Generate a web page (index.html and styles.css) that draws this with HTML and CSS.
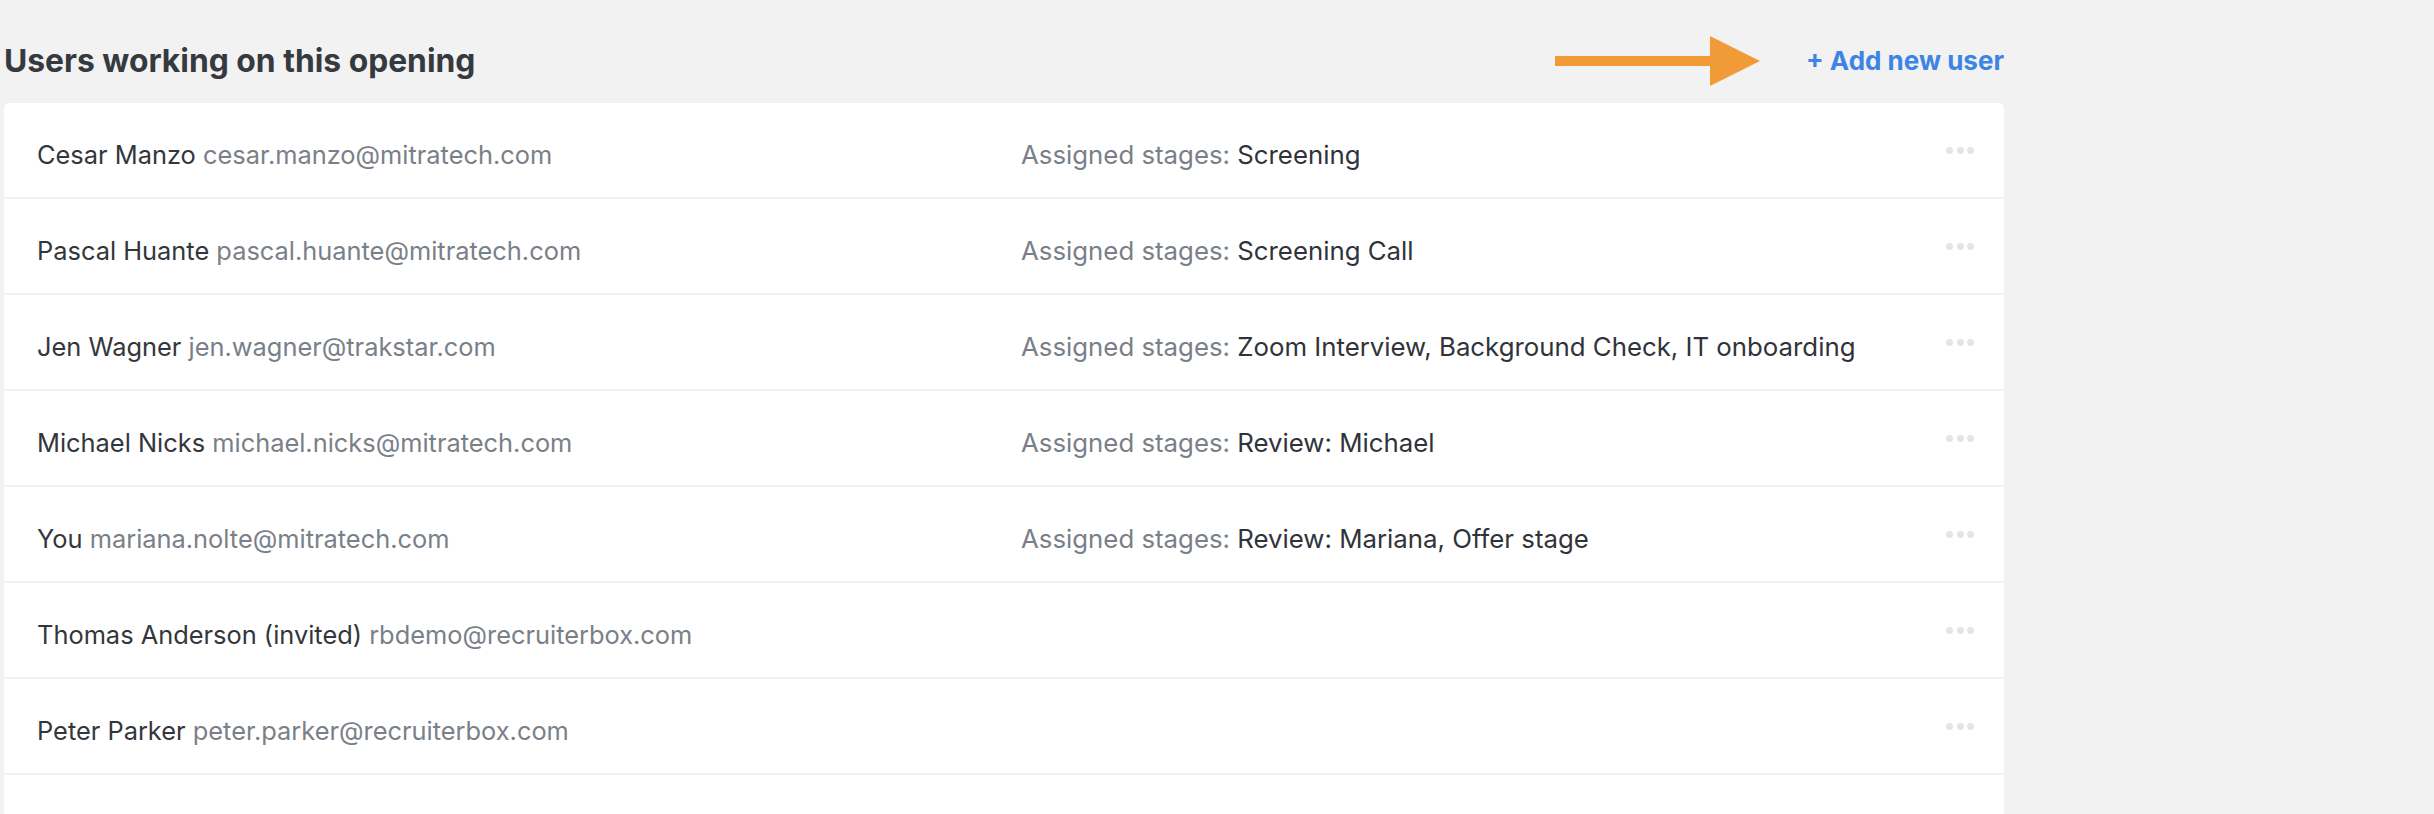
FILE: index.html
```html
<!DOCTYPE html>
<html lang="en">

<head>
	<meta charset="UTF-8">
	<title>Opening users</title>
	<link rel="stylesheet" href="styles.css">
</head>

<body>
	<div class="users">
		<div class="users-head">
			<h2 class="users-title">Users working on this opening</h2>
			<div class="users-add">
				<!-- pointer to the add link -->
				<svg class="hint-arrow" width="205" height="50" viewBox="0 0 205 50">
					<rect x="0" y="20" width="156" height="10" fill="#f19a38"/>
					<polygon points="155,0 205,25 155,50" fill="#f19a38"/>
				</svg>
				<a class="add-link" href="#">+ Add new user</a>
			</div>
		</div>

		<ul class="user-list">
			<li class="user-row">
				<div class="user"><span class="name">Cesar Manzo</span> <span class="email">cesar.manzo@mitratech.com</span></div>
				<div class="stages"><span class="label">Assigned stages:</span> Screening</div>
				<div class="more"><i></i><i></i><i></i></div>
			</li>
			<li class="user-row">
				<div class="user"><span class="name">Pascal Huante</span> <span class="email">pascal.huante@mitratech.com</span></div>
				<div class="stages"><span class="label">Assigned stages:</span> Screening Call</div>
				<div class="more"><i></i><i></i><i></i></div>
			</li>
			<li class="user-row">
				<div class="user"><span class="name">Jen Wagner</span> <span class="email">jen.wagner@trakstar.com</span></div>
				<div class="stages"><span class="label">Assigned stages:</span> Zoom Interview, Background Check, IT onboarding</div>
				<div class="more"><i></i><i></i><i></i></div>
			</li>
			<li class="user-row">
				<div class="user"><span class="name">Michael Nicks</span> <span class="email">michael.nicks@mitratech.com</span></div>
				<div class="stages"><span class="label">Assigned stages:</span> Review: Michael</div>
				<div class="more"><i></i><i></i><i></i></div>
			</li>
			<li class="user-row">
				<div class="user"><span class="name">You</span> <span class="email">mariana.nolte@mitratech.com</span></div>
				<div class="stages"><span class="label">Assigned stages:</span> Review: Mariana, Offer stage</div>
				<div class="more"><i></i><i></i><i></i></div>
			</li>
			<li class="user-row">
				<div class="user"><span class="name">Thomas Anderson (invited)</span> <span class="email">rbdemo@recruiterbox.com</span></div>
				<div class="stages"></div>
				<div class="more"><i></i><i></i><i></i></div>
			</li>
			<li class="user-row">
				<div class="user"><span class="name">Peter Parker</span> <span class="email">peter.parker@recruiterbox.com</span></div>
				<div class="stages"></div>
				<div class="more"><i></i><i></i><i></i></div>
			</li>
			<li class="user-row">
				<div class="user"></div>
				<div class="stages"></div>
				<div class="more"></div>
			</li>
		</ul>
	</div>
</body>

</html>
```
FILE: styles.css
```css
body,
h2,
ul,
li {
	margin: 0;
	padding: 0;
}

ul {
	list-style-type: none;
}

body {
	background: #f2f2f2;
	font-family: Inter, "Liberation Sans", sans-serif;
	color: #33373c;
}

.users {
	width: 2000px;
	margin-left: 4px;
}

/* title on the left, add link on the right */
.users-head {
	display: flex;
	justify-content: space-between;
	align-items: center;
	height: 50px;
	margin-top: 36px;
}

.users-title {
	font-size: 31.8px;
	font-weight: 700;
	line-height: 38px;
	color: #363a3f;
}

.users-add {
	display: flex;
	align-items: center;
	gap: 46px;
}

.hint-arrow {
	display: block;
}

.add-link {
	font-size: 26px;
	font-weight: 700;
	line-height: 32px;
	color: #3d84e6;
	text-decoration: none;
}

.user-list {
	margin-top: 17px;
	background: #fff;
	border-radius: 5px 5px 0 0;
}

.user-row {
	display: grid;
	grid-template-columns: 984px 1fr 28px;
	align-items: center;
	height: 94px;
	padding: 0 30px 0 33px;
	border-bottom: 2px solid #f2f2f2;
	font-size: 25.4px;
	line-height: 30px;
}

.user,
.stages {
	padding-top: 9px;
	white-space: nowrap;
}

.stages {
	font-size: 25.8px;
	color: #30343a;
}

.email,
.label {
	color: #7a8088;
}

.more {
	display: flex;
	gap: 3.5px;
}

.more i {
	width: 7px;
	height: 7px;
	border-radius: 50%;
	background: #e4e5e8;
}
```
